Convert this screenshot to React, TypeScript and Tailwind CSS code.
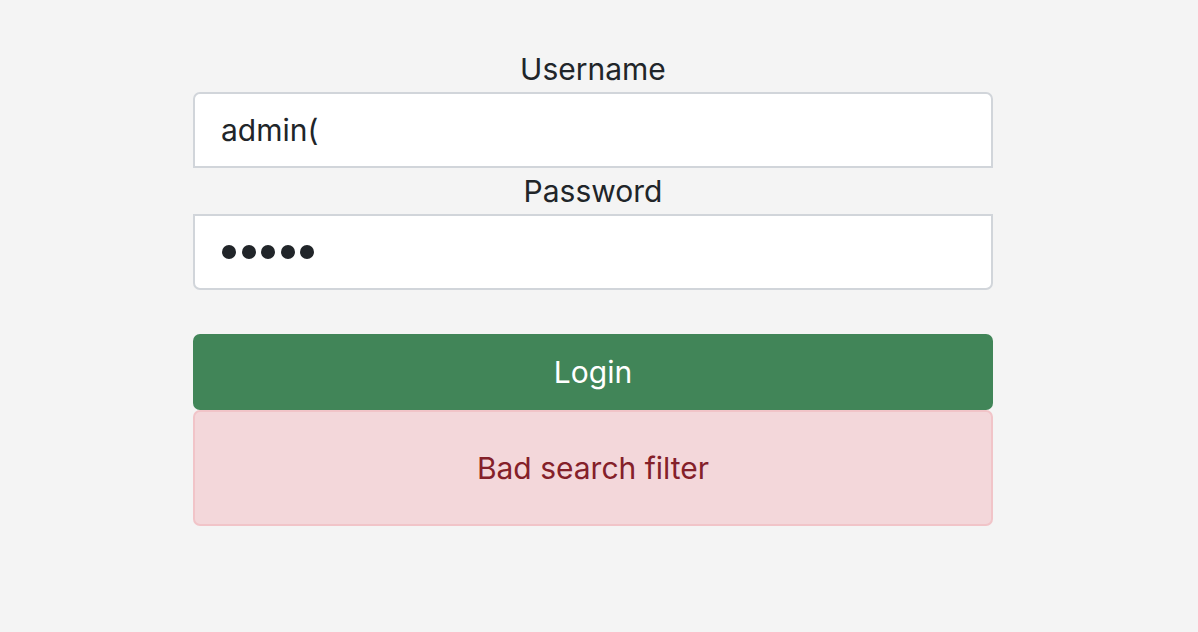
import React from "react";

export default function App() {
  const font = { fontFamily: "Inter, 'Noto Sans', sans-serif" };
  return (
    <div className="min-h-[632px] w-full bg-[#f4f4f4] pt-[46px] pl-[193px]" style={font}>
      <div className="w-[800px] flex flex-col">
        <label className="h-[46px] leading-[46px] text-center text-[30px] text-[#212529]">Username</label>
        <input
          type="text"
          defaultValue="admin("
          className="h-[76px] w-full bg-white border-2 border-[#d1d5da] rounded-t-[7px] px-[26px] text-[30px] text-[#212529] outline-none"
        />
        <label className="h-[46px] leading-[46px] text-center text-[30px] text-[#212529]">Password</label>
        <div className="h-[76px] w-full bg-white border-2 border-[#d1d5da] rounded-b-[7px] pl-[27px] flex items-center gap-[5.5px]">
          <span className="w-[14px] h-[14px] rounded-full bg-[#212529]" />
          <span className="w-[14px] h-[14px] rounded-full bg-[#212529]" />
          <span className="w-[14px] h-[14px] rounded-full bg-[#212529]" />
          <span className="w-[14px] h-[14px] rounded-full bg-[#212529]" />
          <span className="w-[14px] h-[14px] rounded-full bg-[#212529]" />
        </div>
        <div className="h-[44px]" />
        <button className="h-[76px] w-full rounded-[7px] bg-[#418558] text-white text-[30px]">Login</button>
        <div className="h-[116px] w-full rounded-[7px] border-2 border-[#f1c4c8] bg-[#f3d7da] text-[#842029] text-[30px] flex items-center justify-center">
          Bad search filter
        </div>
      </div>
    </div>
  );
}
